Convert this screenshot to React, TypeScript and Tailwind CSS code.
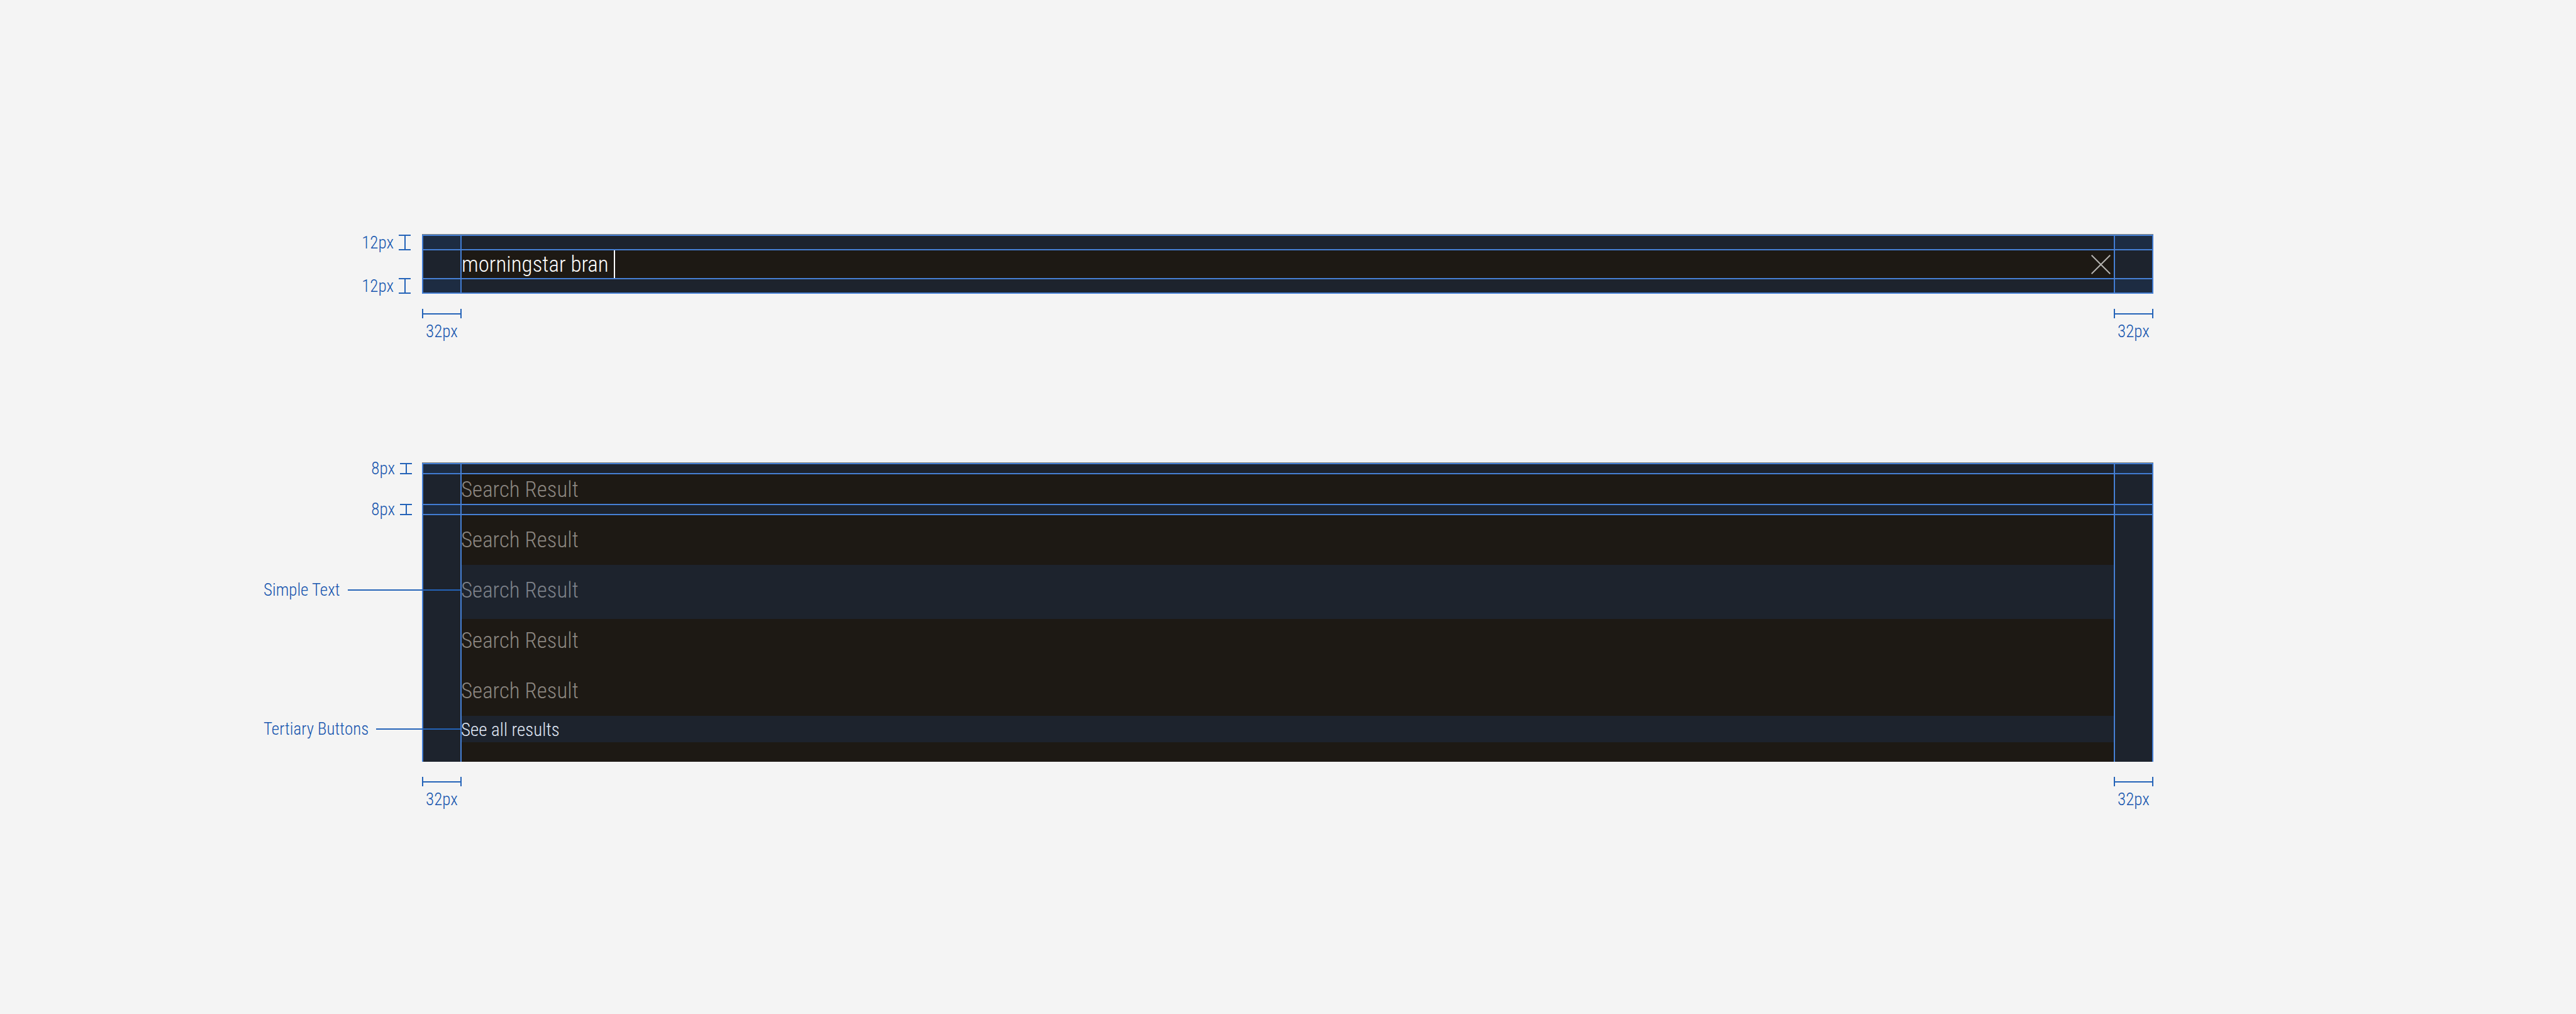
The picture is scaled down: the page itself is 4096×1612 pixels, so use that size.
import React from "react";

const results = [1, 2, 3, 4, 5];

/* Vertical spacing marker: label followed by an I-shaped bracket. */
function HeightMark({ label, size }: { label: string; size: "md" | "sm" }) {
  return (
    <div
      className={
        size === "md"
          ? "flex h-[25px] items-center justify-end gap-2 pr-[18px]"
          : "flex h-[18px] items-center justify-end gap-2 pr-4"
      }
    >
      <span>{label}</span>
      <span className="flex h-full w-[19px] justify-center border-y-2 border-[#2463b8]">
        <span className="w-0.5 bg-[#2463b8]" />
      </span>
    </div>
  );
}

/* Horizontal spacing marker: bracket with its label underneath. */
function WidthMark({ label }: { label: string }) {
  return (
    <div className="flex w-[63px] flex-col items-center gap-1">
      <span className="flex h-[15px] w-full items-center border-x-2 border-[#2463b8]">
        <span className="h-0.5 w-full bg-[#2463b8]" />
      </span>
      <span>{label}</span>
    </div>
  );
}

function WidthMarks() {
  return (
    <div className="flex justify-between pt-6">
      <WidthMark label="32px" />
      <WidthMark label="32px" />
    </div>
  );
}

function Callout({ label }: { label: string }) {
  return (
    <div className="relative z-10 -mr-[61px] flex items-center gap-3 pl-[419px]">
      <span>{label}</span>
      <span className="h-0.5 flex-1 bg-[#2463b8]" />
    </div>
  );
}

function SideGuides() {
  return (
    <div className="pointer-events-none absolute inset-x-0 top-px bottom-0 flex justify-between">
      <div className="w-[63px] border-x-2 border-[#4680d5] bg-[#2060c8]/[0.14] bg-clip-padding" />
      <div className="w-[63px] border-x-2 border-[#4680d5] bg-[#2060c8]/[0.14] bg-clip-padding" />
    </div>
  );
}

export default function App() {
  return (
    <main className="flex min-h-screen flex-col gap-[191px] bg-[#f4f4f4] pt-[372px] font-['Roboto_Condensed','Liberation_Sans_Narrow',sans-serif] text-[27px] leading-[34px] font-light text-[#1554ae]">
      <section className="flex pr-[672px]">
        <div className="flex w-[671px] shrink-0 flex-col gap-11 pt-px">
          <HeightMark label="12px" size="md" />
          <HeightMark label="12px" size="md" />
        </div>
        <div className="flex-1">
          <div className="relative border-t border-[#84867d]">
            <form className="flex h-[94px] items-center bg-[#1d1914] pr-[68px] pl-[63px]">
              <input
                aria-label="Search"
                defaultValue="morningstar bran "
                className="field-sizing-content h-11 bg-transparent text-[35px] text-white outline-none"
              />
              <span className="h-11 w-0.5 bg-white" />
              <button type="button" aria-label="Clear search" className="ml-auto">
                <svg className="h-[31px] w-[31px]" viewBox="0 0 31 31" fill="none" stroke="#b5b3b0" strokeWidth="2">
                  <path d="M0.7 0.7 L30.3 30.3 M30.3 0.7 L0.7 30.3" />
                </svg>
              </button>
            </form>
            <SideGuides />
            <div className="pointer-events-none absolute inset-0 flex flex-col justify-between">
              <div className="h-[25px] border-y-2 border-[#4680d5] bg-[#2060c8]/[0.14] bg-clip-padding" />
              <div className="h-[25px] border-y-2 border-[#4680d5] bg-[#2060c8]/[0.14] bg-clip-padding" />
            </div>
          </div>
          <WidthMarks />
        </div>
      </section>

      <section className="flex pr-[672px]">
        <div className="flex w-[671px] shrink-0 flex-col pt-px">
          <div className="flex flex-col gap-[47px]">
            <HeightMark label="8px" size="sm" />
            <HeightMark label="8px" size="sm" />
          </div>
          <div className="flex flex-col gap-[187px] pt-[102px]">
            <Callout label="Simple Text" />
            <Callout label="Tertiary Buttons" />
          </div>
        </div>
        <div className="flex-1">
          <div className="relative border-t border-[#84867d]">
            <div className="bg-[#1d1914] pt-[3px] pb-[30px] pl-[62px]">
              <ul>
                {results.map((n) => (
                  <li key={n} className="flex h-20 items-center">
                    <a href="#result" className="text-[35px] leading-[48px] text-[#8c8781]">
                      Search Result
                    </a>
                  </li>
                ))}
              </ul>
              <button type="button" className="flex h-[42px] items-center text-[29px] text-white">
                See all results
              </button>
            </div>
            <div className="pointer-events-none absolute inset-0 flex flex-col">
              <div className="h-[18px] border-y-2 border-[#4680d5] bg-[#2060c8]/[0.14] bg-clip-padding" />
              <div className="mt-[47px] h-[18px] border-y-2 border-[#4680d5] bg-[#2060c8]/[0.14] bg-clip-padding" />
              <div className="mx-[63px] mt-[79px] h-[86px] bg-[#2060c8]/[0.14]" />
              <div className="mx-[63px] mt-[154px] h-[42px] bg-[#2060c8]/[0.14]" />
            </div>
            <SideGuides />
          </div>
          <WidthMarks />
        </div>
      </section>
    </main>
  );
}
